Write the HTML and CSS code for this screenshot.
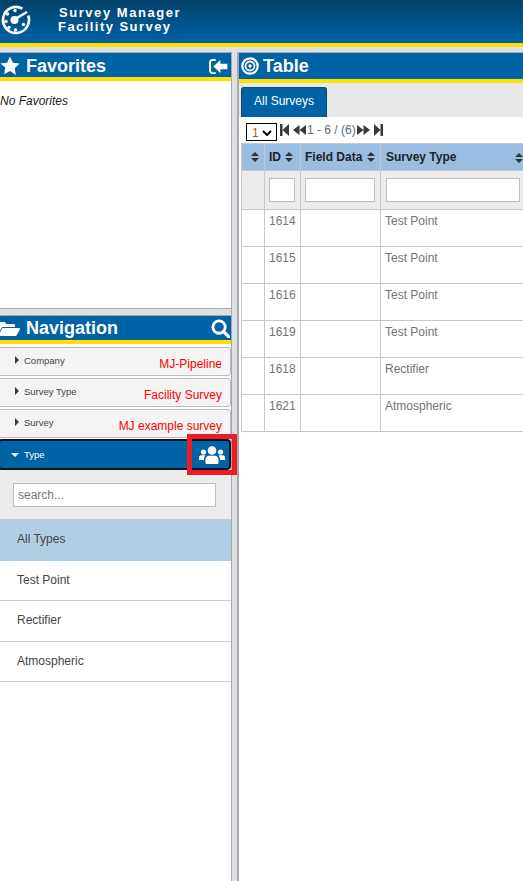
FILE: index.html
```html
<!DOCTYPE html>
<html lang="en">
<head>
<meta charset="utf-8">
<title>Survey Manager</title>
<link rel="stylesheet" href="styles.css">
</head>
<body>
<header class="topbar">
  <svg class="logo" viewBox="0 0 30 30" width="30" height="30">
    <path d="M21.500 3.700A13 13 0 1 0 27.200 10.500" fill="none" stroke="#fff" stroke-width="2.600"/>
    <circle cx="13.500" cy="15" r="4" fill="#fff"/>
    <path d="M15 13.500 26 7" stroke="#fff" stroke-width="2.600"/>
    <circle cx="14" cy="5.500" r="1.700" fill="#fff"/>
    <circle cx="6.500" cy="9" r="1.700" fill="#fff"/>
    <circle cx="5" cy="16.500" r="1.700" fill="#fff"/>
    <circle cx="8" cy="22.500" r="1.700" fill="#fff"/>
    <circle cx="14.500" cy="25" r="1.700" fill="#fff"/>
    <circle cx="22.500" cy="19.500" r="1.700" fill="#fff"/>
  </svg>
  <div class="app-title">
    <div class="app-line">Survey Manager</div>
    <div class="app-line">Facility Survey</div>
  </div>
</header>
<div class="main">
  <aside class="left">
    <section class="fav">
      <div class="bar bar-left">
        <svg class="bar-icon" viewBox="0 0 20 20" width="20" height="20"><path d="M10 .5l2.900 6.200 6.700.9-4.900 4.700 1.200 6.700L10 15l-5.900 3.300 1.200-6.700L.4 7.600l6.700-.9z" fill="#fff"/></svg>
        <span class="bar-title">Favorites</span>
        <svg class="bar-end bar-end-fav" viewBox="0 0 20 16" width="19" height="15"><path d="M7 1H3.500A2.500 2.500 0 0 0 1 3.500v9A2.500 2.500 0 0 0 3.500 15H7" fill="none" stroke="#fff" stroke-width="2"/><path d="M12 1 4.500 8l7.500 7v-4h7.500V5H12z" fill="#fff"/></svg>
      </div>
      <div class="fav-body">No Favorites</div>
    </section>
    <section class="nav">
      <div class="bar bar-left">
        <svg class="bar-icon folder" viewBox="0 0 22 18" width="22" height="18"><path d="M0 14V3.500C0 2.500.8 2 1.500 2h5l2 2h7c1 0 1.500.7 1.500 1.500V7H5.500C4.500 7 3.800 7.500 3.400 8.300z" fill="#fff"/><path d="M4.500 8H21c.8 0 1.200.8.900 1.400l-3.400 6c-.3.400-.7.600-1.200.6H1.500c-.9 0-1.300-.9-.9-1.500z" fill="#fff"/></svg>
        <span class="bar-title">Navigation</span>
        <svg class="bar-end" viewBox="0 0 20 20" width="19" height="19"><circle cx="8.500" cy="8.500" r="6.500" fill="none" stroke="#fff" stroke-width="3"/><path d="M13 13l6 6" stroke="#fff" stroke-width="3.400" stroke-linecap="round"/></svg>
      </div>
      <div class="acc">
        <span class="caret"></span><span class="acc-label">Company</span>
        <span class="acc-value">MJ-Pipeline</span>
      </div>
      <div class="acc">
        <span class="caret"></span><span class="acc-label">Survey Type</span>
        <span class="acc-value">Facility Survey</span>
      </div>
      <div class="acc">
        <span class="caret"></span><span class="acc-label">Survey</span>
        <span class="acc-value">MJ example survey</span>
      </div>
      <div class="acc-active">
        <span class="caret-down"></span><span class="acc-label-active">Type</span>
        <svg class="users" viewBox="0 0 26 18" width="26" height="18">
          <circle cx="13" cy="4.500" r="4.300" fill="#fff"/>
          <path d="M6.500 17v-3.500C6.500 11 8.500 9.800 10 9.800h6c1.500 0 3.500 1.200 3.500 3.700V17c0 .6-.4 1-1 1h-11c-.6 0-1-.4-1-1z" fill="#fff"/>
          <circle cx="4.500" cy="6" r="2.600" fill="#fff"/>
          <circle cx="21.500" cy="6" r="2.600" fill="#fff"/>
          <path d="M0 14v-2.500C0 10 1 9.200 2.200 9.200H6.500C5.300 10.300 5 11.800 5 14zM26 14v-2.500C26 10 25 9.200 23.800 9.200H19.500c1.200 1.100 1.500 2.600 1.500 4.800z" fill="#fff"/>
        </svg>
      </div>
      <div class="search-row"><input class="search" type="text" placeholder="search..."></div>
      <ul class="types">
        <li class="type type-on">All Types</li>
        <li class="type">Test Point</li>
        <li class="type">Rectifier</li>
        <li class="type">Atmospheric</li>
      </ul>
      <div class="highlight"></div>
    </section>
  </aside>
  <section class="right">
    <div class="bar bar-right">
      <svg class="bar-icon" viewBox="0 0 18 18" width="18" height="18"><circle cx="9" cy="9" r="7.700" fill="none" stroke="#fff" stroke-width="2.200"/><circle cx="9" cy="9" r="4.500" fill="none" stroke="#fff" stroke-width="1.800"/><circle cx="9" cy="9" r="1.700" fill="#fff"/></svg>
      <span class="bar-title">Table</span>
    </div>
    <div class="tabs"><div class="tab">All Surveys</div></div>
    <div class="content">
      <div class="pager">
        <div class="select"><span class="select-num">1</span>
          <svg viewBox="0 0 10 6" width="10" height="6"><path d="M1 1l4 4 4-4" fill="none" stroke="#000" stroke-width="2"/></svg>
        </div>
        <svg class="pg pg-first" viewBox="0 0 9 12" width="9" height="12"><path d="M0 0h2.500v12H0zM9 0v12L2.500 6z" fill="#3a3a3a"/></svg>
        <svg class="pg pg-prev" viewBox="0 0 13 10" width="13" height="10"><path d="M6.500 0v10L0 5zM13 0v10L6.500 5z" fill="#3a3a3a"/></svg>
        <span class="pg-text">1 - 6 / (6)</span>
        <svg class="pg pg-next" viewBox="0 0 13 10" width="13" height="10"><path d="M0 0v10l6.500-5zM6.500 0v10L13 5z" fill="#3a3a3a"/></svg>
        <svg class="pg pg-last" viewBox="0 0 9 12" width="9" height="12"><path d="M0 0v12l6.500-6zM6.500 0H9v12H6.500z" fill="#3a3a3a"/></svg>
      </div>
      <table class="grid">
        <thead>
          <tr class="head">
            <th class="c0"><span class="sort"></span></th>
            <th class="c1">ID <span class="sort"></span></th>
            <th class="c2">Field Data <span class="sort"></span></th>
            <th class="c3">Survey Type <span class="sort sort-end"></span></th>
          </tr>
          <tr class="filter">
            <td></td>
            <td><input class="f f1" type="text"></td>
            <td><input class="f f2" type="text"></td>
            <td class="filter-last"><input class="f f3" type="text"></td>
          </tr>
        </thead>
        <tbody>
          <tr><td></td><td>1614</td><td></td><td>Test Point</td></tr>
          <tr><td></td><td>1615</td><td></td><td>Test Point</td></tr>
          <tr><td></td><td>1616</td><td></td><td>Test Point</td></tr>
          <tr><td></td><td>1619</td><td></td><td>Test Point</td></tr>
          <tr><td></td><td>1618</td><td></td><td>Rectifier</td></tr>
          <tr><td></td><td>1621</td><td></td><td>Atmospheric</td></tr>
        </tbody>
      </table>
    </div>
  </section>
</div>
</body>
</html>
```
FILE: styles.css
```css
* { box-sizing: border-box; }
html, body { margin: 0; padding: 0; }
body {
  width: 523px;
  height: 881px;
  overflow: hidden;
  background: #e0e0e0;
  font-family: "Liberation Sans", Arial, sans-serif;
  font-size: 12px;
  color: #333;
}
.topbar {
  height: 47px;
  display: flex;
  align-items: flex-start;
  background: linear-gradient(#02416a, #0063a6);
  border-bottom: 4px solid #ffdf00;
}
.logo { margin: 5px 0 0 1px; flex: none; }
.app-title { margin: 6px 0 0 28px; }
.app-line {
  color: #fff;
  font-weight: bold;
  font-size: 13px;
  line-height: 13.500px;
  letter-spacing: 1.550px;
  white-space: nowrap;
}
.app-line + .app-line { margin-left: -1px; letter-spacing: 1.450px; }
.main { display: flex; height: 834px; padding-top: 5px; }
.left { width: 232px; flex: none; display: flex; flex-direction: column; border-right: 1px solid #a4a8b4; }
.right { width: 286px; margin-left: 5px; flex: none; background: #e8e8e8; border-left: 2px solid #a4a8b4; border-top: 1px solid #a4a8b4; }
.fav { height: 257px; flex: none; background: #fff; border-top: 1px solid #a4a8b4; border-bottom: 1px solid #a4a8b4; }
.nav { flex: 1; margin-top: 6px; background: #fff; border-top: 1px solid #a4a8b4; position: relative; }
.bar {
  display: flex;
  align-items: center;
  background: #0063a6;
  border-bottom: 4px solid #ffdf00;
  color: #fff;
}
.bar-left { height: 28px; }
.fav .bar-left { padding-top: 2px; }
.bar-right { height: 30px; }
.bar-left .bar-icon { margin-left: 0; flex: none; }
.bar-left .folder { margin: 1px 0 0 -2px; }
.bar-right .bar-icon { margin-left: 2px; flex: none; }
.bar-title { font-size: 18px; font-weight: bold; white-space: nowrap; }
.bar-left .bar-title { margin-left: 6px; }
.bar-right .bar-title { margin-left: 4px; }
.bar-end { margin-left: auto; margin-right: 1px; flex: none; }
.bar-end-fav { margin-right: 3px; }
.fav-body { padding: 13px 0 0 0; font-style: italic; color: #222; line-height: 14px; }
.acc {
  height: 29px;
  margin: 3px 0 0 -2px;
  padding: 0 8px 0 16px;
  display: flex;
  align-items: flex-start;
  background: #f4f4f4;
  border: 1px solid #bcbcbc;
  border-radius: 3px;
  position: relative;
  white-space: nowrap;
}
.acc + .acc { margin-top: 2px; }
.caret {
  width: 0; height: 0; margin: 8px 5px 0 0; flex: none;
  border-left: 4px solid #3a3a3a;
  border-top: 4px solid transparent;
  border-bottom: 4px solid transparent;
}
.acc-label { font-size: 9.500px; line-height: 12px; margin-top: 7px; color: #444; }
.acc-value { margin-left: auto; margin-top: 9px; line-height: 14px; color: #f00; font-size: 12px; }
.acc-active {
  height: 31px;
  margin: 1px 0 0 -2px;
  padding-left: 11px;
  display: flex;
  align-items: center;
  background: #0063a6;
  border: 2px solid #0e1420;
  border-radius: 4px;
  color: #fff;
}
.caret-down {
  width: 0; height: 0; margin-right: 5px; flex: none;
  border-top: 4px solid #fff;
  border-left: 4px solid transparent;
  border-right: 4px solid transparent;
}
.acc-label-active { font-size: 9.500px; }
.users { margin-left: auto; margin-right: 4px; flex: none; }
.search-row { height: 50px; padding: 13px 0 0 13px; background: #ececec; border-bottom: 1px solid #ccc; }
.search {
  display: block;
  width: 203px;
  height: 24px;
  padding: 0 4px;
  background: #fff;
  border: 1px solid #bdbdbd;
  border-radius: 0;
  outline: 0;
  font: 12px "Liberation Sans", Arial, sans-serif;
}
.search::placeholder { color: #777; }
.types { list-style: none; margin: 0; padding: 0; }
.type {
  height: 40.500px;
  padding: 12px 0 0 17px;
  line-height: 14px;
  color: #444;
  background: #fff;
  border-bottom: 1px solid #ccc;
}
.type-on { background: #b0cfe4; border-bottom: 0; }
.highlight {
  position: absolute;
  left: 187px;
  top: 118px;
  width: 50px;
  height: 41px;
  border: 5px solid #ed1c24;
  pointer-events: none;
}
.tabs { height: 34px; padding: 4px 0 0 2px; }
.tab {
  width: 86px;
  height: 30px;
  background: #0063a6;
  border: 1px solid #0b4a78;
  border-bottom: 0;
  border-radius: 3px 3px 0 0;
  color: #fff;
  text-align: center;
  line-height: 27px;
  font-size: 12px;
}
.content { background: #fff; margin-left: 0; height: 800px; padding-left: 2px; }
.pager { height: 26px; display: flex; align-items: flex-start; padding: 6px 0 0 5px; color: #5d6a78; }
.select {
  width: 31px;
  height: 18px;
  border: 1px solid #000;
  display: flex;
  align-items: center;
  justify-content: space-between;
  padding: 1px 4px 0 5px;
  flex: none;
  color: #9a6412;
  font-size: 12px;
}
.pg { flex: none; }
.pg-first { margin: 1px 0 0 3px; }
.pg-prev { margin: 2px 0 0 4px; }
.pg-text { line-height: 14px; margin-left: 1px; white-space: nowrap; }
.pg-next { margin: 2px 0 0 1px; }
.pg-last { margin: 1px 0 0 4px; }
.grid {
  border-collapse: collapse;
  table-layout: fixed;
  width: 284px;
}
.grid th, .grid td { border: 1px solid #c8c8c8; padding: 0; }
.c0 { width: 23px; }
.c1 { width: 36px; }
.c2 { width: 80px; }
.c3 { width: 145px; }
.head th {
  height: 27px;
  background: #9abde4;
  color: #222;
  font-size: 12px;
  font-weight: bold;
  text-align: left;
  padding-left: 4px;
  white-space: nowrap;
  position: relative;
}
.head .c0 { padding-left: 8px; }
.head .c3 { padding-left: 5px; }
.sort {
  display: inline-block;
  position: relative;
  width: 8px;
  height: 10px;
  vertical-align: -1px;
  margin-left: 1px;
}
.sort::before, .sort::after {
  content: "";
  position: absolute;
  left: 0;
  border-left: 4px solid transparent;
  border-right: 4px solid transparent;
}
.sort::before { top: 0; border-bottom: 4px solid #333; }
.sort::after { bottom: 0; border-top: 4px solid #333; }
.sort-end { position: absolute; right: 2px; top: 9px; margin: 0; }
.filter td { height: 39px; background: #ececec; padding-left: 4px; }
.filter td:first-child { padding-left: 0; }
.filter .filter-last { padding-left: 5px; }
.f {
  display: block;
  height: 24px;
  padding: 0;
  background: #fff;
  border: 1px solid #bdbdbd;
  border-radius: 0;
  outline: 0;
}
.f1 { width: 26px; }
.f2 { width: 70px; }
.f3 { width: 134px; }
.grid tbody td {
  height: 37px;
  vertical-align: top;
  padding: 4px 0 0 4px;
  line-height: 14px;
  color: #7a7272;
  background: #fff;
}
```
